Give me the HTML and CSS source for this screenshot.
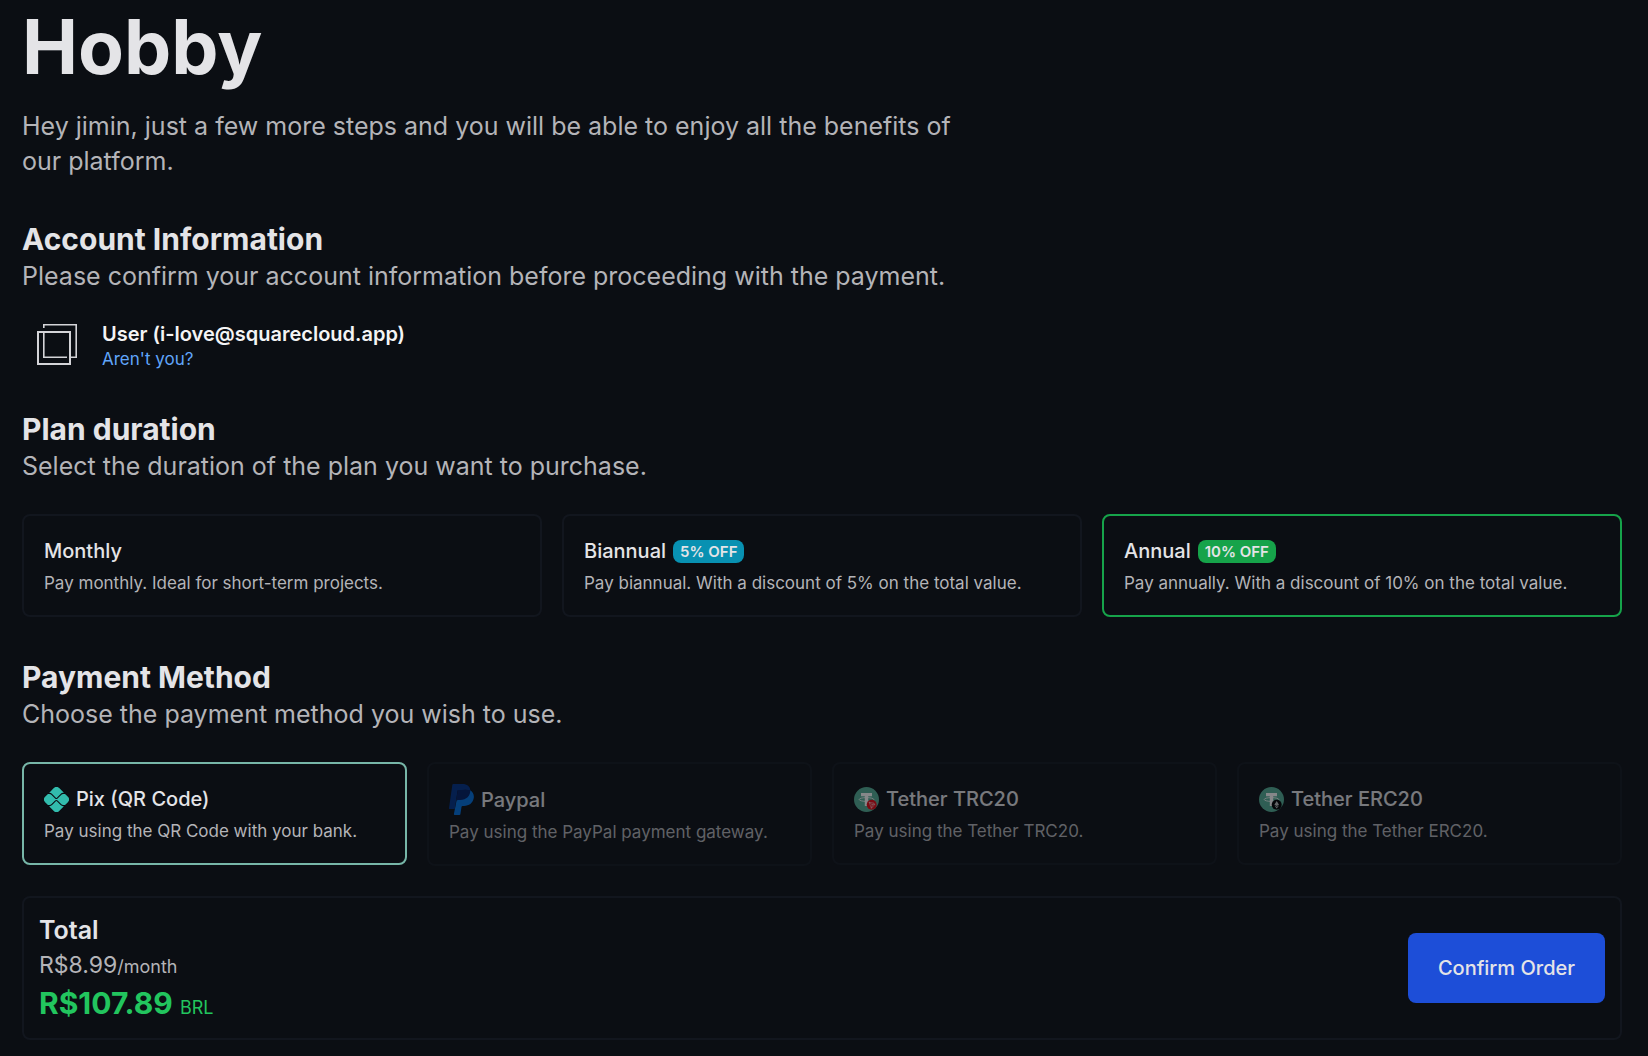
FILE: index.html
```html
<!DOCTYPE html>
<html lang="en">
<head>
  <meta charset="utf-8">
  <meta name="viewport" content="width=device-width, initial-scale=1">
  <title>Hobby</title>
  <link rel="stylesheet" href="styles.css">
</head>
<body>
  <form class="checkout">
    <header class="intro">
      <h1>Hobby</h1>
      <p class="lead">Hey jimin, just a few more steps and you will be able to enjoy all the benefits of our platform.</p>
    </header>

    <section>
      <h2>Account Information</h2>
      <p class="lead">Please confirm your account information before proceeding with the payment.</p>
      <div class="account">
        <svg class="avatar" viewBox="0 0 50 50" fill="none" stroke="#d4d4d8" aria-hidden="true">
          <path d="M11.8 9V5.8h32.4v32.4H39M11.8 14v24.2H35" stroke-width="1.6"/>
          <path d="M6 13h32v32H6z" stroke-width="2"/>
        </svg>
        <div>
          <div class="account-name">User (i-love@squarecloud.app)</div>
          <a class="account-link" href="#">Aren't you?</a>
        </div>
      </div>
    </section>

    <section>
      <h2>Plan duration</h2>
      <p class="lead">Select the duration of the plan you want to purchase.</p>
      <div class="options options-3">
        <label class="option">
          <input type="radio" name="duration" value="monthly">
          <span class="option-title">Monthly</span>
          <span class="option-text">Pay monthly. Ideal for short-term projects.</span>
        </label>
        <label class="option">
          <input type="radio" name="duration" value="biannual">
          <span class="option-title">Biannual <span class="badge badge-blue">5% OFF</span></span>
          <span class="option-text">Pay biannual. With a discount of 5% on the total value.</span>
        </label>
        <label class="option option-green">
          <input type="radio" name="duration" value="annual" checked>
          <span class="option-title">Annual <span class="badge badge-green">10% OFF</span></span>
          <span class="option-text">Pay annually. With a discount of 10% on the total value.</span>
        </label>
      </div>
    </section>

    <section>
      <h2>Payment Method</h2>
      <p class="lead">Choose the payment method you wish to use.</p>
      <div class="options options-4">
        <label class="option option-pix">
          <input type="radio" name="payment" value="pix" checked>
          <span class="option-title">
            <svg class="icon" viewBox="0 0 24 24" fill="#32bcad" aria-hidden="true">
              <path d="M5.283 18.36a3.505 3.505 0 0 0 2.493-1.032l3.6-3.6a.684.684 0 0 1 .946 0l3.613 3.613a3.504 3.504 0 0 0 2.493 1.032h.71l-4.56 4.56a3.647 3.647 0 0 1-5.156 0L4.85 18.36ZM18.428 5.627a3.505 3.505 0 0 0-2.493 1.032l-3.613 3.614a.67.67 0 0 1-.946 0l-3.6-3.6A3.505 3.505 0 0 0 5.283 5.64h-.434l4.573-4.572a3.646 3.646 0 0 1 5.156 0l4.559 4.559ZM1.068 9.422 3.79 6.699h1.492a2.483 2.483 0 0 1 1.744.722l3.6 3.6a1.73 1.73 0 0 0 2.443 0l3.614-3.613a2.482 2.482 0 0 1 1.744-.723h1.767l2.737 2.737a3.646 3.646 0 0 1 0 5.156l-2.736 2.736h-1.768a2.482 2.482 0 0 1-1.744-.722l-3.613-3.613a1.77 1.77 0 0 0-2.444 0l-3.6 3.6a2.483 2.483 0 0 1-1.744.722H3.791l-2.723-2.723a3.646 3.646 0 0 1 0-5.156"/>
            </svg>
            Pix (QR Code)
          </span>
          <span class="option-text">Pay using the QR Code with your bank.</span>
        </label>
        <label class="option">
          <input type="radio" name="payment" value="paypal" disabled>
          <span class="option-title">
            <svg class="icon icon-paypal" viewBox="0 0 25 31" aria-hidden="true">
              <path fill="#0070e0" d="M9.6 6.3h11.600C24 8 25.400 11 24.700 14.300c-1 4.900-4.700 7.600-9.600 7.600h-1.500c-.6 0-1 .4-1.100 1L11.400 30.200c-.1.500-.5.800-1 .8H5.600c-.5 0-.8-.4-.7-.9z"/>
              <path fill="#003087" d="M4.300 0h9.300c4.500 0 7.800 2.800 7.700 6.500-3.500-1.200-7.500-.4-11.700-.4-.6 0-1 .4-1.100 1L5.800 25H.700c-.5 0-.8-.4-.7-.9L3.300.9C3.400.4 3.800 0 4.300 0z"/>
              <path fill="#001c64" d="M9.600 6.100h11.700c.2 6-3.900 9.900-10.100 9.900H9.400c-1 0-1.800.6-2 1.600L8.500 7.100c.1-.6.500-1 1.100-1z"/>
            </svg>
            Paypal
          </span>
          <span class="option-text">Pay using the PayPal payment gateway.</span>
        </label>
        <label class="option">
          <input type="radio" name="payment" value="trc20" disabled>
          <span class="option-title">
            <svg class="icon" viewBox="0 0 25 25" aria-hidden="true">
              <circle cx="12.500" cy="12.500" r="12.500" fill="#53ae94"/>
              <path fill="#fff" d="M7 6h11v3.300h-3.800V19h-3.400V9.300H7z"/>
              <ellipse cx="12.500" cy="12.500" rx="7.300" ry="1.900" fill="none" stroke="#fff" stroke-width=".8"/>
              <circle cx="17.700" cy="17.700" r="5" fill="#e50914"/>
              <path fill="none" stroke="#fff" stroke-opacity=".7" stroke-width=".6" stroke-linejoin="round" d="M15 15.200l4.600.9 1.300 1.200-3.500 4zM15 15.200l3.200 2.500 1.400-1.600M18.200 17.700l-.8 3.600M18.200 17.700l2.700-.4"/>
            </svg>
            Tether TRC20
          </span>
          <span class="option-text">Pay using the Tether TRC20.</span>
        </label>
        <label class="option">
          <input type="radio" name="payment" value="erc20" disabled>
          <span class="option-title">
            <svg class="icon" viewBox="0 0 25 25" aria-hidden="true">
              <circle cx="12.500" cy="12.500" r="12.500" fill="#53ae94"/>
              <path fill="#fff" d="M7 6h11v3.300h-3.800V19h-3.400V9.300H7z"/>
              <ellipse cx="12.500" cy="12.500" rx="7.300" ry="1.900" fill="none" stroke="#fff" stroke-width=".8"/>
              <circle cx="17.700" cy="17.700" r="5" fill="#000"/>
              <path fill="#bbb" d="M17.700 14l2.300 3.800-2.300 1.300-2.300-1.300zM15.400 18.500l2.300 1.300 2.300-1.300-2.300 3.100z"/>
            </svg>
            Tether ERC20
          </span>
          <span class="option-text">Pay using the Tether ERC20.</span>
        </label>
      </div>

      <div class="summary">
        <div>
          <h3>Total</h3>
          <div class="per-month">R$8.99<span class="small">/month</span></div>
          <div class="price">R$107.89 <span class="small">BRL</span></div>
        </div>
        <button class="confirm" type="button">Confirm Order</button>
      </div>
    </section>
  </form>
</body>
</html>
```
FILE: styles.css
```css
* {
  box-sizing: border-box;
}
body {
  margin: 0;
  background: #0b0e13;
  color: #e4e4e7;
  font-family: Inter, "Liberation Sans", sans-serif;
  font-size: 20px;
}
h1, h2, h3, p {
  margin: 0;
}
.checkout {
  display: flex;
  flex-direction: column;
  gap: 40px;
  padding: 9px 26px 16px 22px;
}
h1 {
  font-size: 75px;
  line-height: 75px;
  font-weight: 700;
  margin-bottom: 25px;
}
h2 {
  font-size: 30px;
  line-height: 40px;
  font-weight: 700;
}
.lead {
  max-width: 960px;
  font-size: 25px;
  line-height: 35px;
  color: #b4b4b8;
}

/* account */
.account {
  display: flex;
  align-items: center;
  gap: 20px;
  margin-top: 25px;
  padding-left: 10px;
}
.avatar {
  width: 50px;
  height: 50px;
}
.account-name {
  line-height: 30px;
  font-weight: 600;
  color: #f4f4f5;
}
.account-link {
  display: block;
  font-size: 17px;
  line-height: 20px;
  color: #60a5fa;
  text-decoration: none;
}

/* selectable cards */
.options {
  display: grid;
  gap: 20px;
  margin-top: 30px;
  align-items: start;
}
.options-3 {
  grid-template-columns: repeat(3, 1fr);
}
.options-4 {
  grid-template-columns: repeat(4, 1fr);
}
.option {
  display: flex;
  flex-direction: column;
  gap: 5px;
  padding: 20px;
  border: 2px solid #12161e;
  border-radius: 8px;
  cursor: pointer;
}
.option input {
  position: absolute;
  opacity: 0;
}
.option:has(input:disabled) {
  opacity: 0.5;
  cursor: not-allowed;
}
.option-green:has(input:checked) {
  border-color: #16a34a;
}
.option-pix:has(input:checked) {
  border-color: #77b6a8;
}
.option-title {
  display: flex;
  align-items: center;
  gap: 7px;
  min-height: 30px;
  font-weight: 500;
}
.option-text {
  font-size: 17px;
  line-height: 24px;
  color: #b4b4b8;
}
.badge {
  padding: 0 7px;
  border-radius: 8px;
  font-size: 15px;
  line-height: 23px;
  font-weight: 600;
}
.badge-blue {
  background: #0891b2;
}
.badge-green {
  background: #16a34a;
}
.icon {
  width: 25px;
  height: 25px;
}
.icon-paypal {
  height: 31px;
}

/* total */
.summary {
  display: flex;
  align-items: center;
  justify-content: space-between;
  margin-top: 30px;
  padding: 15px;
  border: 2px solid #12161e;
  border-radius: 8px;
}
h3 {
  font-size: 25px;
  line-height: 35px;
  font-weight: 600;
}
.per-month {
  font-size: 23px;
  line-height: 35px;
  color: #b4b4b8;
}
.price {
  font-size: 30px;
  line-height: 40px;
  font-weight: 700;
  color: #22c55e;
}
.small {
  font-size: 18px;
  line-height: 1;
  font-weight: 400;
}
.confirm {
  padding: 20px 30px;
  border: 0;
  border-radius: 8px;
  background: #1d4ed8;
  color: #e4e4e7;
  font: 500 20px/30px Inter, "Liberation Sans", sans-serif;
  cursor: pointer;
}
```
